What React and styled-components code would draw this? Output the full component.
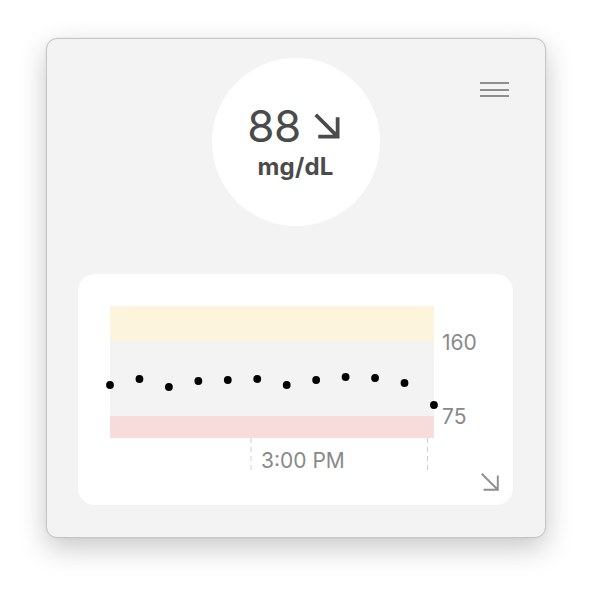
import React from 'react';
import styled, { createGlobalStyle } from 'styled-components';

const GlobalStyle = createGlobalStyle`
  html, body {
    margin: 0;
    padding: 0;
    background: #ffffff;
    font-family: Inter, "Noto Sans", "Liberation Sans", sans-serif;
  }
`;

const Page = styled.div`
  width: 592px;
  height: 592px;
  display: flex;
  justify-content: center;
  align-items: flex-start;
  padding-top: 38px;
  box-sizing: border-box;
`;

const Window = styled.div`
  width: 500px;
  height: 500px;
  box-sizing: border-box;
  background: #f3f3f3;
  border: 1px solid #c6c6c6;
  border-radius: 11px;
  box-shadow: 0 10px 28px rgba(0, 0, 0, 0.22), 0 0 2px rgba(0, 0, 0, 0.08);
  display: flex;
  flex-direction: column;
  padding: 19px 32px 0 31px;
`;

const Header = styled.div`
  display: grid;
  grid-template-columns: 1fr 168px 1fr;
  align-items: start;
`;

const Reading = styled.div`
  grid-column: 2;
  width: 168px;
  height: 168px;
  box-sizing: border-box;
  padding-top: 6px;
  border-radius: 50%;
  background: #ffffff;
  display: flex;
  flex-direction: column;
  align-items: center;
  justify-content: center;
  color: #4b4b4b;
`;

const ValueRow = styled.div`
  display: flex;
  align-items: center;
  gap: 11px;
  margin-top: -6px;
  margin-left: -2px;
`;

const Value = styled.span`
  font-size: 44px;
  font-weight: 400;
  line-height: 44px;
  letter-spacing: -0.5px;
`;

const Unit = styled.span`
  font-size: 24px;
  font-weight: 700;
  line-height: 26px;
  margin-top: 6px;
  letter-spacing: 0.2px;
`;

const MenuButton = styled.button`
  grid-column: 3;
  justify-self: end;
  margin: 24px 4px 0 0;
  padding: 0;
  border: none;
  background: none;
  display: flex;
  flex-direction: column;
  gap: 4.5px;
  cursor: pointer;
`;

const MenuLine = styled.span`
  display: block;
  width: 29px;
  height: 2px;
  background: #8f8f8f;
`;

const ChartCard = styled.div`
  position: relative;
  margin-top: 48px;
  height: 231px;
  background: #ffffff;
  border-radius: 17px;
`;

const ExpandButton = styled.button`
  position: absolute;
  right: 11px;
  bottom: 11px;
  width: 24px;
  height: 24px;
  padding: 0;
  border: none;
  background: none;
  display: flex;
  align-items: center;
  justify-content: center;
  cursor: pointer;
`;

const Label = styled.text`
  font-family: Inter, "Noto Sans", "Liberation Sans", sans-serif;
  font-size: 21px;
  fill: #898989;
`;

const readings = [111, 105, 113, 107, 106, 105, 111, 106, 103, 104, 109, 131];

const TrendArrow = ({ size, color, width }) => (
  <svg width={size} height={size} viewBox="0 0 24 24" fill="none">
    <path
      d="M3 3 L20.5 20.5 M20.5 5 V20.5 H5"
      stroke={color}
      strokeWidth={width}
      strokeLinecap="butt"
      strokeLinejoin="miter"
    />
  </svg>
);

const Chart = () => (
  <svg width="435" height="231" viewBox="0 0 435 231">
    <rect x="32" y="32" width="324" height="35" fill="#fdf4de" />
    <rect x="32" y="67" width="324" height="75" fill="#f3f3f3" />
    <rect x="32" y="142" width="324" height="22" fill="#f6dcdb" />
    <line x1="173" y1="164" x2="173" y2="197" stroke="#cfcfcf" strokeWidth="1" strokeDasharray="5 4" />
    <line x1="349.5" y1="164" x2="349.5" y2="197" stroke="#cfcfcf" strokeWidth="1" strokeDasharray="5 4" />
    {readings.map((y, i) => (
      <circle key={i} cx={32 + i * 29.45} cy={y} r="3.9" fill="#000000" />
    ))}
    <Label x="364" y="76">160</Label>
    <Label x="364" y="150">75</Label>
    <Label x="183" y="194">3:00 PM</Label>
  </svg>
);

export default function App() {
  return (
    <Page>
      <GlobalStyle />
      <Window>
        <Header>
          <Reading>
            <ValueRow>
              <Value>88</Value>
              <TrendArrow size={30} color="#4b4b4b" width={3} />
            </ValueRow>
            <Unit>mg/dL</Unit>
          </Reading>
          <MenuButton aria-label="Menu">
            <MenuLine />
            <MenuLine />
            <MenuLine />
          </MenuButton>
        </Header>
        <ChartCard>
          <Chart />
          <ExpandButton aria-label="Expand">
            <TrendArrow size={22} color="#8f8f8f" width={2.1} />
          </ExpandButton>
        </ChartCard>
      </Window>
    </Page>
  );
}
